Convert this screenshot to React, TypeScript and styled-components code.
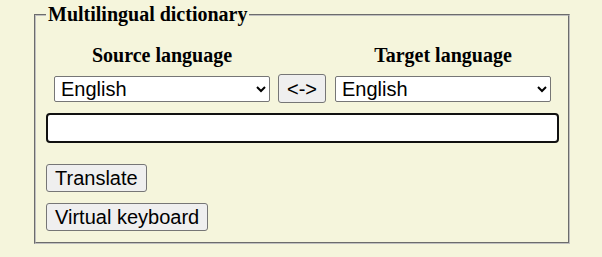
import styled, { createGlobalStyle } from "styled-components";

const GlobalStyle = createGlobalStyle`
  html, body {
    margin: 0;
    padding: 0;
    background: #f5f5dc;
  }
  body {
    font-family: "Liberation Serif", "Times New Roman", serif;
  }
`;

const Page = styled.div`
  padding: 3px 32px 0 34px;
`;

const Fieldset = styled.fieldset`
  margin: 0;
  padding: 4px 10px 11px 10px;
  border: 2px groove rgb(192, 192, 192);
  min-width: 0;
`;

const Legend = styled.legend`
  padding: 0 2px;
  font-family: "Liberation Serif", serif;
  font-weight: bold;
  font-size: 20px;
  color: #000;
`;

const LangGrid = styled.div`
  display: grid;
  grid-template-columns: 216px 49px 216px;
  column-gap: 8px;
  row-gap: 7px;
  align-items: center;
  margin: 0 0 10px 8px;
`;

const LangLabel = styled.div<{ $col: number }>`
  grid-column: ${(p) => p.$col};
  text-align: center;
  font-family: "Liberation Serif", serif;
  font-weight: bold;
  font-size: 20px;
  line-height: 23px;
  padding-top: 14px;
`;

const Select = styled.select`
  width: 216px;
  height: 26px;
  font-family: "Liberation Sans", Arial, sans-serif;
  font-size: 20px;
  color: #000;
  background: #fff;
  border: 1px solid #767676;
  border-radius: 2px;
  padding: 0 2px;
`;

const Button = styled.button`
  font-family: "Liberation Sans", Arial, sans-serif;
  font-size: 20px;
  color: #000;
  background: #efefef;
  border: 1px solid #767676;
  border-radius: 3px;
  padding: 2px 8px;
  line-height: 22px;
  justify-self: start;
`;

const SwapButton = styled(Button)`
  height: 29px;
`;

const TextInput = styled.input`
  display: block;
  box-sizing: border-box;
  width: 513px;
  height: 30px;
  border: 2px solid #111;
  border-radius: 4px;
  background: #fff;
  font-size: 20px;
  font-family: "Liberation Sans", Arial, sans-serif;
`;

const Actions = styled.div`
  display: flex;
  flex-direction: column;
  align-items: flex-start;
  gap: 11px;
  margin-top: 21px;
`;

const languages = ["English", "Deutsch", "Français", "Español", "Italiano"];

export default function App() {
  return (
    <>
      <GlobalStyle />
      <Page>
        <Fieldset>
          <Legend>Multilingual dictionary</Legend>
          <LangGrid>
            <LangLabel $col={1}>Source language</LangLabel>
            <LangLabel $col={3}>Target language</LangLabel>
            <Select defaultValue="English">
              {languages.map((l) => (
                <option key={l}>{l}</option>
              ))}
            </Select>
            <SwapButton>{"<->"}</SwapButton>
            <Select defaultValue="English">
              {languages.map((l) => (
                <option key={l}>{l}</option>
              ))}
            </Select>
          </LangGrid>
          <TextInput type="text" />
          <Actions>
            <Button>Translate</Button>
            <Button>Virtual keyboard</Button>
          </Actions>
        </Fieldset>
      </Page>
    </>
  );
}
